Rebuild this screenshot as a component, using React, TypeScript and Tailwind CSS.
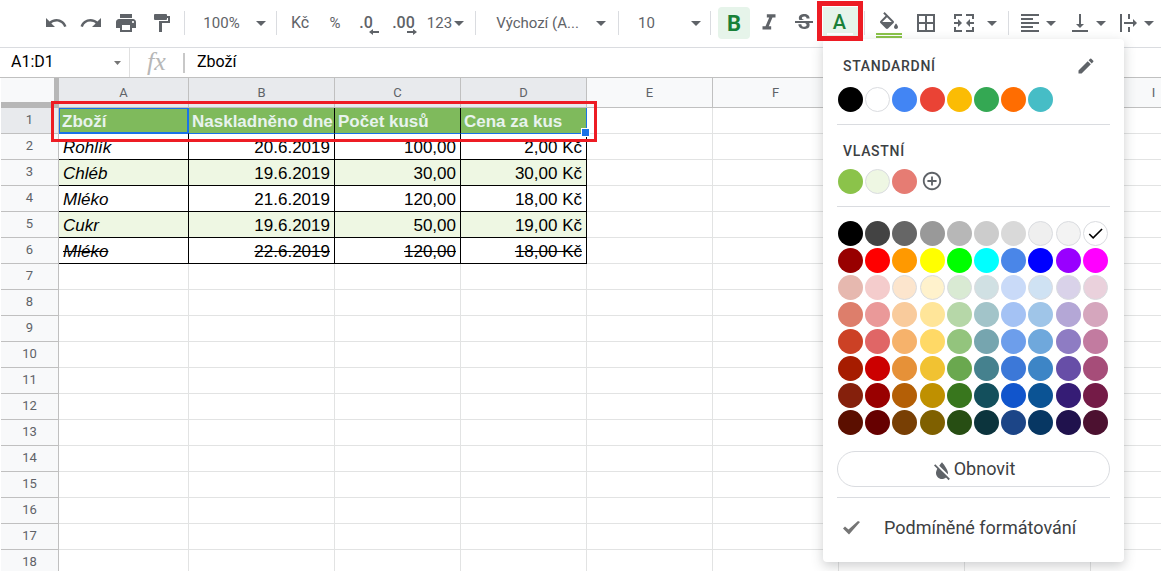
import React from "react";
import {
  MdUndo, MdRedo, MdPrint, MdFormatItalic, MdStrikethroughS, MdBorderAll,
  MdFormatAlignLeft, MdVerticalAlignBottom, MdEdit, MdAddCircleOutline, MdCheck, MdFormatColorReset,
} from "react-icons/md";

const Caret = () => (
  <svg width="10" height="5" viewBox="0 0 10 5" className="shrink-0" aria-hidden="true">
    <path d="M0 0h10L5 5z" fill="#5f6368" />
  </svg>
);

const Separator = () => <span className="h-6 w-px shrink-0 bg-[#dadce0]" />;

type ToolProps = { label: string; className: string; children: React.ReactNode };

const Tool = ({ label, className, children }: ToolProps) => (
  <button type="button" aria-label={label} className={`flex h-8 shrink-0 items-center justify-center ${className}`}>
    {children}
  </button>
);

const PaintIcon = () => (
  <svg width="18" height="18" viewBox="0 0 18 18" fill="#5f6368" aria-hidden="true">
    <path d="M2 0h11a1 1 0 0 1 1 1v1h3v7H9v9H6V7H15V4h-1v1a1 1 0 0 1-1 1H2a1 1 0 0 1-1-1V1a1 1 0 0 1 1-1z" />
  </svg>
);

const BucketIcon = () => (
  <svg width="24" height="17" viewBox="0 0 24 17" fill="#5f6368" aria-hidden="true">
    <path d="M16.56 8.94L7.62 0 6.21 1.41l2.38 2.38-5.15 5.15c-.59.59-.59 1.54 0 2.12l5.5 5.5c.29.29.68.44 1.06.44s.77-.15 1.06-.44l5.5-5.5c.59-.58.59-1.53 0-2.12zM5.21 10L10 5.21 14.79 10H5.21zM19 11.5s-2 2.17-2 3.5c0 1.1.9 2 2 2s2-.9 2-2c0-1.33-2-3.5-2-3.5z" />
  </svg>
);

const MergeIcon = () => (
  <svg width="20" height="18" viewBox="0 0 20 18" fill="#5f6368" aria-hidden="true">
    <path d="M0 0h8v2H2v3H0zM12 0h8v5h-2V2h-6zM0 13h2v3h6v2H0zM18 13h2v5h-8v-2h6zM0 8h4V5l4 4-4 4v-3H0zM20 8h-4V5l-4 4 4 4v-3h4z" />
  </svg>
);

const WrapIcon = () => (
  <svg width="18" height="18" viewBox="0 0 18 18" fill="#5f6368" aria-hidden="true">
    <path d="M0 0h2v18H0zM8 0h2v5H8zM8 13h2v5H8zM4 8h9V5l4 4-4 4v-3H4z" />
  </svg>
);

const HeavyCheckIcon = () => (
  <svg width="17" height="14" viewBox="0 0 17 14" fill="#757575" className="shrink-0" aria-hidden="true">
    <path d="M0 7.500L2 5.500l3.500 3L15 0l2 1L6 13.500z" />
  </svg>
);

const Decimal = ({ digits, right }: { digits: string; right?: boolean }) => (
  <span className="relative text-base font-medium leading-5 text-[#5f6368]">
    {digits}
    <svg
      width="10" height="6" viewBox="0 0 10 6" fill="#5f6368" aria-hidden="true"
      className={right ? "absolute -right-0.5 top-4 rotate-180" : "absolute -right-1.5 top-4"}
    >
      <path d="M0 3l4-3v2h6v2H4v2z" />
    </svg>
  </span>
);

const standard = ["#000000", "#ffffff", "#4285f4", "#ea4335", "#fbbc04", "#34a853", "#ff6d01", "#46bdc6"];
const custom = ["#8bc34a", "#eef7e3", "#e67c73"];
const palette = [
  ["#000000", "#434343", "#666666", "#999999", "#b7b7b7", "#cccccc", "#d9d9d9", "#efefef", "#f3f3f3", "#ffffff"],
  ["#980000", "#ff0000", "#ff9900", "#ffff00", "#00ff00", "#00ffff", "#4a86e8", "#0000ff", "#9900ff", "#ff00ff"],
  ["#e6b8af", "#f4cccc", "#fce5cd", "#fff2cc", "#d9ead3", "#d0e0e3", "#c9daf8", "#cfe2f3", "#d9d2e9", "#ead1dc"],
  ["#dd7e6b", "#ea9999", "#f9cb9c", "#ffe599", "#b6d7a8", "#a2c4c9", "#a4c2f4", "#9fc5e8", "#b4a7d6", "#d5a6bd"],
  ["#cc4125", "#e06666", "#f6b26b", "#ffd966", "#93c47d", "#76a5af", "#6d9eeb", "#6fa8dc", "#8e7cc3", "#c27ba0"],
  ["#a61c00", "#cc0000", "#e69138", "#f1c232", "#6aa84f", "#45818e", "#3c78d8", "#3d85c6", "#674ea7", "#a64d79"],
  ["#85200c", "#990000", "#b45f06", "#bf9000", "#38761d", "#134f5c", "#1155cc", "#0b5394", "#351c75", "#741b47"],
  ["#5b0f00", "#660000", "#783f04", "#7f6000", "#274e13", "#0c343d", "#1c4587", "#073763", "#20124d", "#4c1130"],
];
const outlined = ["#ffffff", "#eef7e3", "#efefef", "#f3f3f3", "#fce5cd", "#fff2cc", "#d9ead3", "#cfe2f3", "#d0e0e3", "#d9d2e9", "#ead1dc"];

const Swatch = ({ color, checked }: { color: string; checked?: boolean }) => (
  <button
    type="button"
    aria-label={color}
    className={`flex size-[25px] items-center justify-center rounded-full ${outlined.includes(color) ? "border border-[#dadce0]" : ""}`}
    style={{ backgroundColor: color }}
  >
    {checked && <MdCheck size={19} color="#000" className="shrink-0" />}
  </button>
);

const ColorMenu = () => (
  <div className="absolute left-0 top-8 z-20 w-[301px] rounded bg-white px-3.5 pb-3.5 text-[#3c4043] shadow-[0_4px_12px_rgba(60,64,67,0.25)]">
    <div className="flex h-12 items-center justify-between pl-1.5 pr-3.5 pt-1.5">
      <h2 className="text-sm font-medium tracking-wider">STANDARDNÍ</h2>
      <button type="button" aria-label="Upravit"><MdEdit size={20} color="#5f6368" /></button>
    </div>
    <div className="grid grid-cols-10 border-b border-[#dadce0] pb-3 pl-px">
      {standard.map((c) => <Swatch key={c} color={c} />)}
    </div>
    <h2 className="flex h-11 items-center pl-1.5 pt-2 text-sm font-medium tracking-wider">VLASTNÍ</h2>
    <div className="grid grid-cols-10 border-b border-[#dadce0] pb-3 pl-px">
      {custom.map((c) => <Swatch key={c} color={c} />)}
      <button type="button" aria-label="Přidat" className="flex h-6 w-[25px] items-center justify-center">
        <MdAddCircleOutline size={22} color="#5f6368" className="shrink-0" />
      </button>
    </div>
    <div className="grid auto-rows-[27px] grid-cols-10 pb-3.5 pl-px pt-3.5">
      {palette.flat().map((c) => <Swatch key={c} color={c} checked={c === "#ffffff"} />)}
    </div>
    <button type="button" className="flex h-9 w-full items-center justify-center rounded-full border border-[#dadce0] text-lg">
      <MdFormatColorReset size={24} color="#5f6368" className="-ml-0.5 mt-1 shrink-0" />
      Obnovit
    </button>
    <div className="mt-2.5 border-t border-[#dadce0] pt-2.5">
      <button type="button" className="flex h-10 w-full items-center gap-6 whitespace-nowrap pl-1.5 text-lg">
        <HeavyCheckIcon />
        Podmíněné formátování
      </button>
    </div>
  </div>
);

const Toolbar = () => (
  <div className="flex h-12 shrink-0 items-center border-b border-[#dadce0] pb-px pl-[38px] text-[15px] text-[#5f6368]">
    <Tool label="Zpět" className="w-[35px]"><MdUndo size={24} /></Tool>
    <Tool label="Znovu" className="w-[35px]"><MdRedo size={24} /></Tool>
    <Tool label="Tisk" className="w-[35px]"><MdPrint size={24} /></Tool>
    <Tool label="Kopírovat formát" className="w-[41px] pr-1"><PaintIcon /></Tool>
    <Separator />
    <Tool label="Lupa" className="w-[91px] gap-4 pl-2"><span>100%</span><Caret /></Tool>
    <Separator />
    <Tool label="Měna" className="w-[46px]"><span className="text-base">Kč</span></Tool>
    <Tool label="Procenta" className="w-6"><span>%</span></Tool>
    <Tool label="Méně desetinných míst" className="w-[38px]"><Decimal digits=".0" /></Tool>
    <Tool label="Více desetinných míst" className="w-[37px]"><Decimal digits=".00" right /></Tool>
    <Tool label="Další formáty" className="w-[53px] gap-0.5 pr-1.5"><span>123</span><Caret /></Tool>
    <Separator />
    <Tool label="Písmo" className="w-[142px] gap-[17px] pl-2"><span className="whitespace-nowrap">Výchozí (A...</span><Caret /></Tool>
    <Separator />
    <Tool label="Velikost písma" className="w-[91px] gap-9 pl-2.5"><span>10</span><Caret /></Tool>
    <Separator />
    <Tool label="Tučné" className="ml-[7px] w-8 rounded-sm bg-[#e6f4ea] text-[22px] font-bold text-[#188038]">B</Tool>
    <Tool label="Kurzíva" className="w-[37px]"><MdFormatItalic size={26} /></Tool>
    <Tool label="Přeškrtnuté" className="w-[36px] pr-0.5"><MdStrikethroughS size={24} /></Tool>
    <div className="relative shrink-0">
      <Tool label="Barva textu" className="w-[35px] bg-[#e6f4ea] pr-0.5">
        <span className="flex w-[26px] flex-col items-center border-b-2 border-white text-xl font-medium leading-[22px] text-[#188038]">A</span>
      </Tool>
      <ColorMenu />
      <span className="pointer-events-none absolute -bottom-0.5 -left-1.5 -right-[5px] -top-1.5 z-30 border-[5px] border-[#ed1c24]" />
    </div>
    <span className="w-1.5 shrink-0" />
    <Separator />
    <Tool label="Barva výplně" className="w-12 pt-1">
      <span className="flex w-[26px] flex-col items-center">
        <BucketIcon />
        <span className="mt-1 h-[5px] w-full border-y-2 border-[#8bc34a]" />
      </span>
    </Tool>
    <Tool label="Ohraničení" className="w-[26px]"><MdBorderAll size={24} /></Tool>
    <Tool label="Sloučit buňky" className="w-[43px] pl-1.5"><MergeIcon /></Tool>
    <Tool label="Možnosti sloučení" className="w-[26px] pr-1.5"><Caret /></Tool>
    <Separator />
    <Tool label="Zarovnání" className="w-[51px] gap-1 pl-1"><MdFormatAlignLeft size={24} /><Caret /></Tool>
    <Tool label="Svislé zarovnání" className="w-[49px] gap-1 pl-1"><MdVerticalAlignBottom size={24} /><Caret /></Tool>
    <Tool label="Obtékání textu" className="w-[47px] gap-1.5 pl-2"><WrapIcon /><Caret /></Tool>
  </div>
);

const FormulaBar = () => (
  <div className="flex h-[30px] shrink-0 items-center border-b border-[#c0c0c0] pl-[11px] text-base text-black">
    <input aria-label="Pole názvu" defaultValue="A1:D1" className="w-[103px] shrink-0 bg-transparent pb-0.5 outline-none" />
    <svg width="7" height="4" viewBox="0 0 7 4" className="shrink-0" aria-hidden="true"><path d="M0 0h7L3.500 4z" fill="#757575" /></svg>
    <span className="ml-2 h-full w-px shrink-0 bg-[#e0e0e0]" />
    <label htmlFor="formula" className="w-[53px] shrink-0 pb-0.5 text-center font-['Liberation_Serif',serif] text-[26px] italic leading-6 text-[#b7b7b7]">fx</label>
    <span className="h-5 w-0.5 shrink-0 bg-[#c8c8c8]" />
    <input id="formula" defaultValue="Zboží" className="ml-3 min-w-0 flex-1 bg-transparent pb-0.5 outline-none" />
  </div>
);

const columns = ["A", "B", "C", "D", "E", "F", "G", "H", "I"];
const widths = [130, 146, 126, 126, 126, 126, 126, 126, 126];
const rows = [
  ["Zboží", "Naskladněno dne", "Počet kusů", "Cena za kus"],
  ["Rohlík", "20.6.2019", "100,00", "2,00 Kč"],
  ["Chléb", "19.6.2019", "30,00", "30,00 Kč"],
  ["Mléko", "21.6.2019", "120,00", "18,00 Kč"],
  ["Cukr", "19.6.2019", "50,00", "19,00 Kč"],
  ["Mléko", "22.6.2019", "120,00", "18,00 Kč"],
];

const cellStyle = (r: number, c: number) => {
  if (r > 5 || c > 3) return "px-1 border-[#e2e3e3]";
  if (r === 0) return `px-[3px] bg-[#7fba5c] font-bold text-[#e8f3ee] ${c === 3 ? "border-r-[#1a73e8]" : "border-r-black"} border-b-[#1a73e8]`;
  return `px-1 border-black text-black ${r === 2 || r === 4 ? "bg-[#eef7e3]" : ""} ${r === 5 ? "line-through" : ""} ${c === 0 ? "italic" : "text-right"}`;
};

const Sheet = () => (
  <div className="relative min-h-0 flex-1 overflow-hidden pl-px">
    <table className="w-[1216px] table-fixed border-separate border-spacing-0">
      <colgroup>
        <col style={{ width: 58 }} />
        {widths.map((w, i) => <col key={i} style={{ width: w }} />)}
      </colgroup>
      <thead>
        <tr className="h-[30px]">
          <th aria-label="Vybrat vše" className="border-b-[6px] border-r-[5px] border-[#b7b7b7] bg-[#f8f9fa] p-0" />
          {columns.map((name, c) => (
            <th key={name} scope="col" className={`border-b border-r border-[#c0c0c0] p-0 text-[13px] font-normal leading-5 text-[#5f6368] ${c < 4 ? "bg-[#e8eaed]" : "bg-[#f8f9fa]"}`}>
              {name}
            </th>
          ))}
        </tr>
      </thead>
      <tbody>
        {Array.from({ length: 18 }, (_, r) => (
          <tr key={r} className="h-[26px]">
            <th scope="row" className={`border-b border-r border-[#c0c0c0] p-0 pb-0.5 text-[13px] font-normal leading-5 text-[#5f6368] ${r === 0 ? "bg-[#e8eaed]" : "bg-[#f8f9fa]"}`}>
              {r + 1}
            </th>
            {columns.map((name, c) => (
              <td key={name} className={`relative whitespace-nowrap border-b border-r pb-0 pt-0.5 font-['Liberation_Sans',sans-serif] text-[17px] leading-[23px] ${cellStyle(r, c)}`}>
                {rows[r]?.[c]}
                {r === 0 && c === 0 && <span className="absolute -right-px bottom-0 left-0 top-0 border border-r-2 border-[#1a73e8]" />}
                {r === 0 && c === 3 && <span className="absolute -bottom-1 -right-1 z-10 size-[9px] border border-white bg-[#1a73e8]" />}
              </td>
            ))}
          </tr>
        ))}
      </tbody>
    </table>
    <span className="pointer-events-none absolute left-[51px] top-[23px] z-10 h-[41px] w-[546px] border-[3px] border-[#ed1c24]" />
  </div>
);

export default function App() {
  return (
    <main className="flex h-screen flex-col overflow-hidden bg-white font-[Roboto,sans-serif]">
      <Toolbar />
      <FormulaBar />
      <Sheet />
    </main>
  );
}
